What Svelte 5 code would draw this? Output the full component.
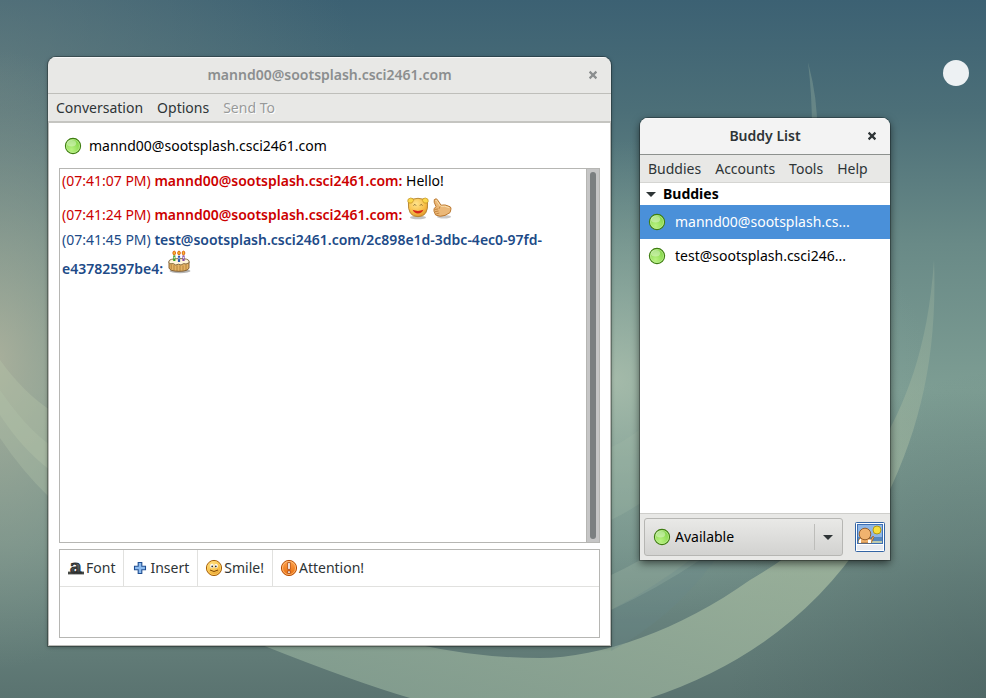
<script>
  const conversationMenu = [
    { label: 'Conversation' },
    { label: 'Options' },
    { label: 'Send To', disabled: true }
  ];
  const buddyMenu = ['Buddies', 'Accounts', 'Tools', 'Help'];
  const messages = [
    { time: '(07:41:07 PM)', who: 'mannd00@sootsplash.csci2461.com:', kind: 'remote', text: 'Hello!', icons: [] },
    { time: '(07:41:24 PM)', who: 'mannd00@sootsplash.csci2461.com:', kind: 'remote', text: '', icons: ['laugh', 'thumb'] },
    { time: '(07:41:45 PM)', who: 'test@sootsplash.csci2461.com/2c898e1d-3dbc-4ec0-97fd-e43782597be4:', kind: 'local', text: '', icons: ['cake'] }
  ];
  const buddies = ['mannd00@sootsplash.cs...', 'test@sootsplash.csci246...'];
  const tools = [
    { icon: 'font', label: 'Font' },
    { icon: 'plus', label: 'Insert' },
    { icon: 'smile', label: 'Smile!' },
    { icon: 'alert', label: 'Attention!' }
  ];
  let selected = $state(0);
  let draft = $state('');
</script>

{#snippet orb()}
  <svg class="orb" viewBox="0 0 18 18" aria-hidden="true">
    <circle cx="9" cy="9" r="7.6" fill="url(#orbFill)" stroke="#3f7d12" stroke-width="1.1" />
    <circle cx="9" cy="9" r="6.5" fill="none" stroke="#c9f3a0" stroke-width=".8" opacity=".8" />
    <ellipse cx="7.5" cy="6.3" rx="4.6" ry="3.2" fill="#fff" opacity=".35" />
  </svg>
{/snippet}

{#snippet cross()}
  <svg class="cross" viewBox="0 0 10 10" aria-hidden="true">
    <path d="M1.6 1.6 8.4 8.4M8.4 1.6 1.6 8.4" stroke="currentColor" stroke-width="2.2" />
  </svg>
{/snippet}

{#snippet emoticon(name)}
  <svg class="emoticon" viewBox="0 0 24 24" role="img" aria-label={name}>
    {#if name === 'laugh'}
      <ellipse cx="12" cy="21.5" rx="8" ry="1.8" fill="#777" opacity=".45" />
      <path d="M2.4 6Q1.4 20.7 12 20.7T21.6 6Q18 2.3 12 2.3T2.4 6Z" fill="url(#faceFill)" stroke="#b1812e" stroke-width=".9" />
      <g fill="#fbd84b" stroke="#c08f20" stroke-width=".7">
        <path d="M2 3.3Q4.7 1 7 2.7L7.6 4.6 5.8 7 3 7 1.8 5.4Z" />
        <path d="M22 3.3Q19.3 1 17 2.7L16.4 4.6 18.2 7 21 7 22.2 5.4Z" />
      </g>
      <path d="M7.6 9.6 8.8 8.4 10 9.6M14 9.6 15.2 8.4 16.4 9.6" fill="none" stroke="#6d5226" stroke-width=".9" />
      <path d="M6.6 13.8Q12 16 17.4 13.8 15.6 17.6 12 17.6 8.4 17.6 6.6 13.8Z" fill="#d5261a" />
    {:else if name === 'thumb'}
      <ellipse cx="14" cy="20.8" rx="7" ry="1.8" fill="#777" opacity=".4" />
      <path d="M4.3 3.6Q6.6 1.4 8 4.6L11 9.2Q15 8 20.2 10.8 21.4 11.8 20.8 13.8L20 16.6 15 19.4Q10 21.3 5.6 19L4 15.2Q3.2 12.6 6 10.6L4.2 6.2Z" fill="#ebb878" stroke="#bb7931" stroke-width="1" />
      <path d="M5.4 4.4Q6.4 3.6 7.2 5.4L10.4 10.3Q14.5 9.4 19.3 11.7" fill="none" stroke="#fbe0ae" stroke-width="1" />
      <path d="M4.8 13.4 8 13M5 15.7 8.6 15M6.2 17.9 9.4 17M10.2 10.4 9 12.8" fill="none" stroke="#bb7931" stroke-width=".8" />
    {:else}
      <ellipse cx="13" cy="21" rx="10.5" ry="2.2" fill="#777" opacity=".55" />
      <path d="M2 11.5V18Q3 21.3 12 21.3T22 18V11.5Z" fill="#e4b467" stroke="#7a5626" stroke-width=".9" />
      <path d="M4.2 14.5V19M7 15V20.5M10 15.5V21M13 15.5V21M16 15.5V20.7M19 14.5V20" stroke="#a8762f" stroke-width=".8" />
      <path d="M2 11.2Q2 8.8 12 8.6T22 11.2V12.8L19 14 16.7 13.6 14 15 11.5 14.2 8.7 15 6.3 13.6 3 13.8 2 12.6Z" fill="#fff5da" stroke="#7e6238" stroke-width=".9" />
      <g fill="none" stroke-width="2.2"><path d="M7.3 5.4V11" stroke="#3a9e20" /><path d="M12 5.8V12" stroke="#2a58b2" /><path d="M16.5 5.4V11" stroke="#8048a4" /></g>
      <path d="M7.3 6.8V8.6M12 7.4V9.2M16.5 6.8V8.6" stroke="#e5e5e5" stroke-width="1" />
      <g fill="#ffbd2f" stroke="#d75b0b" stroke-width=".9"><ellipse cx="7.2" cy="3" rx="1.3" ry="1.9" /><ellipse cx="12" cy="3" rx="1.3" ry="1.9" /><ellipse cx="16.5" cy="3" rx="1.3" ry="1.9" /></g>
    {/if}
  </svg>
{/snippet}

{#snippet toolIcon(name)}
  <svg class="tool-icon" viewBox="0 0 18 18" aria-hidden="true">
    {#if name === 'font'}
      <path d="M1 12.6H17V15.4H1Z" fill="#454845" />
      <text x="3" y="14" font-family="DejaVu Serif" font-weight="700" font-size="18" fill="url(#inkFill)" stroke="#2b2e2e" stroke-width="1">a</text>
    {:else if name === 'plus'}
      <path d="M7.2 3.5H10.8V7.2H14.5V10.8H10.8V14.5H7.2V10.8H3.5V7.2H7.2Z" fill="#8dbcf0" stroke="#1f4d91" stroke-width="1.1" />
    {:else if name === 'smile'}
      <circle cx="9" cy="9" r="7.6" fill="url(#faceFill)" stroke="#a7600c" />
      <circle cx="9" cy="9" r="6.5" fill="none" stroke="#ffd768" stroke-width=".8" />
      <ellipse cx="6.9" cy="7" rx="1.7" ry="2.1" fill="#fff" /><ellipse cx="11.1" cy="7" rx="1.7" ry="2.1" fill="#fff" />
      <circle cx="7.2" cy="7.4" r=".9" fill="#333" /><circle cx="10.8" cy="7.4" r=".9" fill="#333" />
      <path d="M5 11Q9 14 13 11" fill="none" stroke="#824600" />
    {:else}
      <circle cx="9" cy="9" r="7.6" fill="url(#alertFill)" stroke="#b94d04" />
      <circle cx="9" cy="9" r="6.5" fill="none" stroke="#ffc684" stroke-width=".8" />
      <path d="M7.7 3.6H10.3V10.4H7.7ZM7.7 11.9H10.3V14.4H7.7Z" fill="#fff" stroke="#a63e02" stroke-width=".8" />
    {/if}
  </svg>
{/snippet}

<main class="desktop">
  <svg class="wallpaper" viewBox="0 0 986 698" preserveAspectRatio="none" aria-hidden="true">
    <defs>
      <linearGradient id="sky" x1="0" y1="0" x2="0" y2="1">
        <stop offset="0" stop-color="#3c6173" /><stop offset=".16" stop-color="#4c6f78" />
        <stop offset=".35" stop-color="#698a87" /><stop offset=".56" stop-color="#7d9d93" />
        <stop offset=".78" stop-color="#728f88" /><stop offset="1" stop-color="#5a7370" />
      </linearGradient>
      <radialGradient id="warm" gradientUnits="userSpaceOnUse" cx="0" cy="0" r="1" gradientTransform="matrix(190 0 0 310 -5 360)">
        <stop offset="0" stop-color="#b1b39d" stop-opacity=".85" /><stop offset="1" stop-color="#91a092" stop-opacity="0" />
      </radialGradient>
      <radialGradient id="dusk" gradientUnits="userSpaceOnUse" cx="0" cy="0" r="1" gradientTransform="matrix(380 0 0 260 -20 80)">
        <stop offset="0" stop-color="#6f8482" stop-opacity=".6" /><stop offset="1" stop-color="#6f8482" stop-opacity="0" />
      </radialGradient>
      <radialGradient id="mist" gradientUnits="userSpaceOnUse" cx="0" cy="0" r="1" gradientTransform="matrix(320 0 0 240 610 380)">
        <stop offset="0" stop-color="#acc0ae" stop-opacity=".85" /><stop offset="1" stop-color="#84a59b" stop-opacity="0" />
      </radialGradient>
      <radialGradient id="shade" gradientUnits="userSpaceOnUse" cx="0" cy="0" r="1" gradientTransform="matrix(280 0 0 320 1010 690)">
        <stop offset="0" stop-color="#435b5b" stop-opacity=".5" /><stop offset="1" stop-color="#435b5b" stop-opacity="0" />
      </radialGradient>
      <linearGradient id="sweep" x1="0" y1="1" x2="1" y2="0">
        <stop offset="0" stop-color="#8ba696" stop-opacity=".75" /><stop offset=".6" stop-color="#a4b99f" stop-opacity=".8" />
        <stop offset="1" stop-color="#91aa9a" stop-opacity=".45" />
      </linearGradient>
      <radialGradient id="orbFill" cx=".4" cy=".75" r=".7"><stop offset="0" stop-color="#b8f280" /><stop offset="1" stop-color="#81d447" /></radialGradient>
      <radialGradient id="faceFill" cx=".4" cy=".3" r=".75"><stop offset="0" stop-color="#ffe48c" /><stop offset=".6" stop-color="#f8c04a" /><stop offset="1" stop-color="#df9228" /></radialGradient>
      <linearGradient id="alertFill" x1="0" y1="0" x2="0" y2="1"><stop offset="0" stop-color="#ffa24c" /><stop offset="1" stop-color="#e76c0c" /></linearGradient>
      <linearGradient id="inkFill" x1="0" y1="0" x2="0" y2="1"><stop offset="0" stop-color="#8a8e89" /><stop offset="1" stop-color="#282b2b" /></linearGradient>
    </defs>
    <rect width="986" height="698" fill="url(#sky)" />
    <rect width="986" height="698" fill="url(#dusk)" />
    <rect width="986" height="698" fill="url(#warm)" />
    <rect width="986" height="698" fill="url(#mist)" />
    <rect width="986" height="698" fill="url(#shade)" />
    <path d="M0 360Q23 392 50 410V470Q22 449 0 415Z" fill="#b3c2a8" opacity=".4" />
    <path d="M0 390Q25 427 50 445V498Q22 471 0 438Z" fill="#b3c2a8" opacity=".35" />
    <path d="M262 645Q355 682 410 698H650Q790 652 866 536C915 450 938 370 934 260C928 350 905 405 876 454C840 514 810 545 750 580C680 630 600 658 540 658Q480 658 420 645Z" fill="url(#sweep)" />
    <path d="M808 62Q818 100 817 130H812Q812 95 808 62Z" fill="#a4bda9" opacity=".3" />
    <path d="M611 447Q628 440 645 425V500Q628 512 611 520Z" fill="#a4bda9" opacity=".25" />
    <path d="M611 575Q665 550 700 515V560Q655 590 611 610Z" fill="#a4bda9" opacity=".3" />
    <path d="M611 651Q670 620 715 560H690Q650 590 611 610Z" fill="#67898a" opacity=".25" />
  </svg>

  <div class="hot-spot"></div>

  <section class="window conversation" aria-label="Conversation window">
    <header class="titlebar">
      <h1>mannd00@sootsplash.csci2461.com</h1>
      <button class="close" aria-label="Close conversation">{@render cross()}</button>
    </header>
    <nav class="menubar" aria-label="Conversation menu">
      {#each conversationMenu as item}
        <button disabled={item.disabled}>{item.label}</button>
      {/each}
    </nav>
    <div class="conversation-body">
      <div class="contact">{@render orb()}<span>mannd00@sootsplash.csci2461.com</span></div>
      <div class="history">
        <div class="messages">
          {#each messages as message}
            <p class={message.kind}><span>{message.time}</span> <b>{message.who}</b> <span class="said">{message.text}{#each message.icons as icon}{@render emoticon(icon)}{/each}</span></p>
          {/each}
        </div>
        <div class="scroll-track"><div class="scroll-thumb"></div></div>
      </div>
      <div class="composer">
        <div class="toolbar">
          {#each tools as tool}
            <button>{@render toolIcon(tool.icon)}<span>{tool.label}</span></button>
          {/each}
        </div>
        <textarea bind:value={draft} aria-label="Message"></textarea>
      </div>
    </div>
  </section>

  <section class="window buddy-list" aria-label="Buddy List window">
    <header class="titlebar active">
      <h1>Buddy List</h1>
      <button class="close" aria-label="Close buddy list">{@render cross()}</button>
    </header>
    <nav class="menubar" aria-label="Buddy list menu">
      {#each buddyMenu as item}
        <button>{item}</button>
      {/each}
    </nav>
    <div class="roster">
      <button class="group">
        <svg class="arrow" viewBox="0 0 10 5" aria-hidden="true"><path d="M0 0H10L5 5Z" fill="currentColor" /></svg>
        <span>Buddies</span>
      </button>
      {#each buddies as buddy, index}
        <button class="buddy" class:selected={selected === index} onclick={() => (selected = index)}>
          {@render orb()}<span>{buddy}</span>
        </button>
      {/each}
    </div>
    <footer>
      <div class="status">
        {@render orb()}
        <select aria-label="Status"><option>Available</option><option>Away</option><option>Offline</option></select>
        <svg class="arrow" viewBox="0 0 10 5" aria-hidden="true"><path d="M0 0H10L5 5Z" fill="currentColor" /></svg>
      </div>
      <button class="avatar" aria-label="Buddy icon">
        <svg viewBox="0 0 30 30" aria-hidden="true">
          <rect x=".5" y=".5" width="29" height="29" rx="1" fill="#fff" stroke="#3465a4" />
          <rect x="2.5" y="2.5" width="25" height="19" fill="#8fb6e5" stroke="#3e70b4" />
          <path d="M3 15H27V19H3Z" fill="#5788bd" /><path d="M3 19H27V21H3Z" fill="#bdcab0" />
          <path d="M4 21V17L7 15.5H13L16 17.5 18 14 19 15.5 16 21Z" fill="#ecae6a" stroke="#9a622d" stroke-width=".8" />
          <path d="M4 21V18L6 16.5V21ZM13 21V18L16 17.5V21Z" fill="#fff" />
          <circle cx="10" cy="12" r="5.8" fill="#f0b36f" stroke="#99612b" />
          <circle cx="22" cy="8" r="4" fill="#f7df3e" stroke="#b69b13" />
          <path d="M2 23H28V28H2Z" fill="#e8ebf1" />
        </svg>
      </button>
    </footer>
  </section>
</main>

<style>
  :global(body) { margin: 0; }
  .desktop {
    position: relative;
    min-height: 100vh;
    overflow: hidden;
    font: 14px/20px "Noto Sans", "Open Sans", sans-serif;
    color: #000;
  }
  .desktop * { box-sizing: border-box; }
  button, select, textarea { margin: 0; padding: 0; border: 0; background: none; font: inherit; color: inherit; }
  svg { display: block; flex: none; }
  h1, p { margin: 0; font-size: inherit; }
  .wallpaper { position: absolute; inset: 0; width: 100%; height: 100%; }
  .hot-spot { position: absolute; top: 60px; right: 17px; width: 26px; height: 26px; border-radius: 50%; background: #edf1f3; }
  .window {
    position: absolute;
    display: flex;
    flex-direction: column;
    border-radius: 8px 8px 0 0;
    background: #e8e8e6;
    color: #2e3436;
    overflow: hidden;
  }
  .conversation { top: 57px; right: 375px; bottom: 52px; left: 48px; box-shadow: 0 0 0 1px #0004, 0 1px 4px #0005; }
  .buddy-list { top: 118px; right: 96px; bottom: 138px; width: 250px; box-shadow: 0 0 0 1px #0004, 0 3px 8px #0009; }
  .titlebar {
    display: grid;
    grid-template-columns: 36px 1fr 36px;
    align-items: center;
    height: 37px;
    flex: none;
    border-bottom: 1px solid #bebeba;
    box-shadow: inset 0 1px #f8f8f8;
    color: #8b8e8f;
    text-align: center;
  }
  .titlebar h1 { grid-column: 2; font-weight: 600; }
  .active { background: #f3f3f3; border-color: #8d918e; color: #2e3436; }
  .close { display: grid; place-items: center; height: 36px; }
  .cross { width: 10px; height: 10px; }
  .menubar { display: flex; flex: none; gap: 14px; height: 29px; padding: 0 8px; border-bottom: 2px solid #c5c5c1; }
  .buddy-list .menubar { height: 28px; border-bottom: 1px solid #d5d5d2; }
  .menubar button:disabled { color: #989a9a; text-shadow: 1px 1px #fff; }
  .conversation-body { display: flex; flex: 1; min-height: 0; flex-direction: column; padding: 0 10px 7px; border: solid #bdbdb9; border-width: 0 1px 1px; background: #fff; }
  .contact { display: flex; flex: none; align-items: center; gap: 7px; height: 45px; padding-left: 5px; color: #000; }
  .orb { width: 18px; height: 18px; }
  .history { display: flex; flex: 1; min-height: 0; border: 1px solid #b6b6b3; }
  .messages { flex: 1; min-width: 0; padding: 2px; overflow: hidden; }
  .messages p { margin-bottom: 5px; }
  .remote { color: #cc0000; }
  .local { color: #204a87; }
  .messages b { font-weight: 600; }
  .said { color: #000; }
  .emoticon { display: inline-block; width: 24px; height: 24px; vertical-align: baseline; }
  .scroll-track { width: 13px; padding: 3px; border-left: 1px solid #b6b6b3; background: #c5c5c5; }
  .scroll-thumb { height: 100%; border-radius: 3px; background: #7b7f80; }
  .composer { display: flex; flex: none; flex-direction: column; height: 89px; margin-top: 6px; border: 1px solid #b6b6b3; color: #2e3436; }
  .toolbar { display: flex; height: 37px; flex: none; border-bottom: 1px solid #e1e1df; }
  .toolbar button { display: flex; align-items: center; gap: 1px; padding: 0 8px 0 7px; border-right: 1px solid #e1e1df; }
  .toolbar button:last-child { border-right: 0; }
  .tool-icon { width: 18px; height: 18px; }
  textarea { display: block; flex: 1; width: 100%; min-height: 0; padding: 3px; resize: none; outline: 0; }
  .roster { display: flex; flex: 1; min-height: 0; flex-direction: column; background: #fff; color: #000; }
  .group { display: flex; align-items: center; gap: 7px; height: 22px; padding-left: 6px; font-weight: 700; }
  .arrow { width: 10px; height: 5px; color: #2e3436; }
  .buddy { display: flex; align-items: center; gap: 9px; height: 34px; padding-left: 8px; white-space: nowrap; }
  .selected { background: #4a90d9; color: #fff; }
  footer { display: flex; flex: none; align-items: center; gap: 12px; height: 47px; padding: 0 5px 0 4px; border-top: 1px solid #cececb; }
  .status { display: flex; flex: 1; min-width: 0; align-items: center; height: 38px; padding: 0 9px 0 8px; border: 1px solid #b6b6b3; border-radius: 3px; background: linear-gradient(#e9e9e7, #d2d2d0); color: #000; }
  .status select { flex: 1; min-width: 0; height: 26px; margin-right: 8px; padding-left: 4px; border-right: 1px solid #bdbdba; appearance: none; outline: 0; }
  .avatar { flex: none; }
  .avatar svg { width: 30px; height: 30px; }
</style>
